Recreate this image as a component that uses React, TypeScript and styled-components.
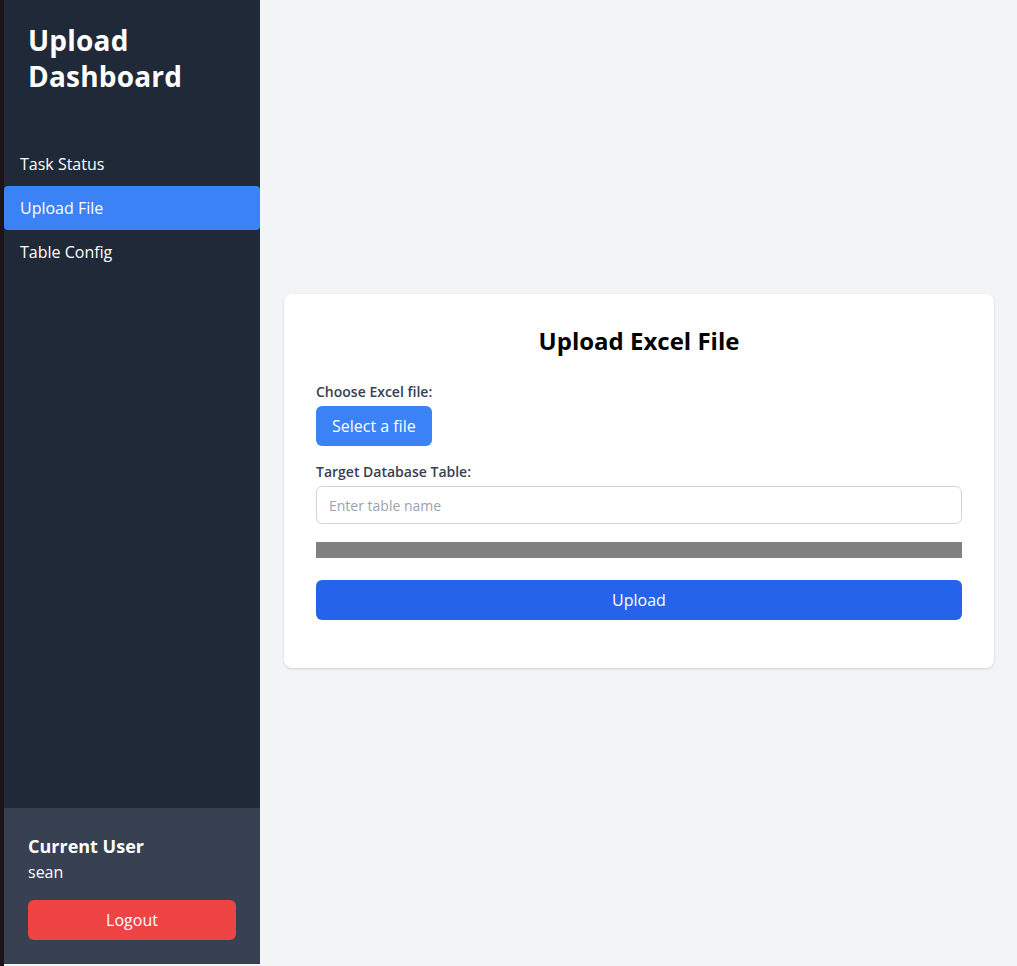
import React from "react";
import styled, { createGlobalStyle } from "styled-components";

const Global = createGlobalStyle`
  html, body { margin: 0; padding: 0; }
  body {
    font-family: "Open Sans", "Noto Sans", sans-serif;
    background: #f3f4f6;
  }
  * { box-sizing: border-box; }
`;

const Page = styled.div`
  display: flex;
  height: 966px;
  background: #f3f4f6;
`;

const Edge = styled.div`
  width: 4px;
  flex-shrink: 0;
  background: #1c1418;
`;

const Sidebar = styled.aside`
  width: 256px;
  flex-shrink: 0;
  background: #1f2937;
  color: #fff;
  display: flex;
  flex-direction: column;
  height: 964px;
`;

const Brand = styled.h1`
  margin: 0;
  padding: 22px 24px 0 24px;
  font-size: 28px;
  line-height: 36px;
  font-weight: 700;
  letter-spacing: 0.2px;
`;

const Nav = styled.nav`
  margin-top: 48px;
  display: flex;
  flex-direction: column;
`;

const NavItem = styled.a<{ $active?: boolean }>`
  display: block;
  height: 44px;
  line-height: 44px;
  padding: 0 16px;
  font-size: 16px;
  color: #fff;
  border-radius: 4px;
  background: ${(p) => (p.$active ? "#3b82f6" : "transparent")};
  cursor: pointer;
`;

const UserPanel = styled.div`
  margin-top: auto;
  background: #374151;
  padding: 26px 24px 24px 24px;
`;

const UserTitle = styled.div`
  font-size: 18px;
  font-weight: 700;
  line-height: 24px;
`;

const UserName = styled.div`
  font-size: 16px;
  line-height: 24px;
  margin-top: 2px;
`;

const LogoutButton = styled.button`
  margin-top: 16px;
  width: 100%;
  height: 40px;
  border: none;
  border-radius: 6px;
  background: #ef4444;
  color: #fff;
  font-family: inherit;
  font-size: 16px;
`;

const Main = styled.main`
  flex: 1;
  display: flex;
  align-items: center;
  padding: 0 23px 0 24px;
`;

const Card = styled.section`
  width: 100%;
  background: #fff;
  border-radius: 8px;
  box-shadow: 0 1px 3px rgba(0, 0, 0, 0.1), 0 1px 2px rgba(0, 0, 0, 0.06);
  padding: 31px 32px 48px 32px;
  margin-top: -4px;
`;

const CardTitle = styled.h2`
  margin: 0 0 25px 0;
  text-align: center;
  font-size: 24px;
  line-height: 32px;
  font-weight: 700;
  color: #000;
`;

const Label = styled.label`
  display: block;
  font-size: 14px;
  font-weight: 600;
  line-height: 20px;
  color: #374151;
  margin-bottom: 4px;
`;

const SelectButton = styled.button`
  height: 40px;
  padding: 0 16px;
  border: none;
  border-radius: 6px;
  background: #3b82f6;
  color: #fff;
  font-family: inherit;
  font-size: 16px;
`;

const Field = styled.div<{ $mb?: number }>`
  display: flex;
  flex-direction: column;
  align-items: flex-start;
  margin-bottom: ${(p) => p.$mb ?? 16}px;
`;

const Input = styled.input`
  width: 100%;
  height: 38px;
  padding: 0 12px;
  border: 1px solid #d1d5db;
  border-radius: 6px;
  font-family: inherit;
  font-size: 14px;
  color: #111827;
  &::placeholder { color: #9ca3af; }
`;

const Progress = styled.div`
  height: 16px;
  width: 100%;
  background: #808080;
  margin-bottom: 22px;
`;

const UploadButton = styled.button`
  width: 100%;
  height: 40px;
  border: none;
  border-radius: 6px;
  background: #2563eb;
  color: #fff;
  font-family: inherit;
  font-size: 16px;
`;

export default function App() {
  return (
    <>
      <Global />
      <Page>
        <Edge />
        <Sidebar>
          <Brand>
            Upload
            <br />
            Dashboard
          </Brand>
          <Nav>
            <NavItem>Task Status</NavItem>
            <NavItem $active>Upload File</NavItem>
            <NavItem>Table Config</NavItem>
          </Nav>
          <UserPanel>
            <UserTitle>Current User</UserTitle>
            <UserName>sean</UserName>
            <LogoutButton>Logout</LogoutButton>
          </UserPanel>
        </Sidebar>
        <Main>
          <Card>
            <CardTitle>Upload Excel File</CardTitle>
            <Field $mb={16}>
              <Label>Choose Excel file:</Label>
              <SelectButton>Select a file</SelectButton>
            </Field>
            <Field $mb={18}>
              <Label>Target Database Table:</Label>
              <Input placeholder="Enter table name" />
            </Field>
            <Progress />
            <UploadButton>Upload</UploadButton>
          </Card>
        </Main>
      </Page>
    </>
  );
}
